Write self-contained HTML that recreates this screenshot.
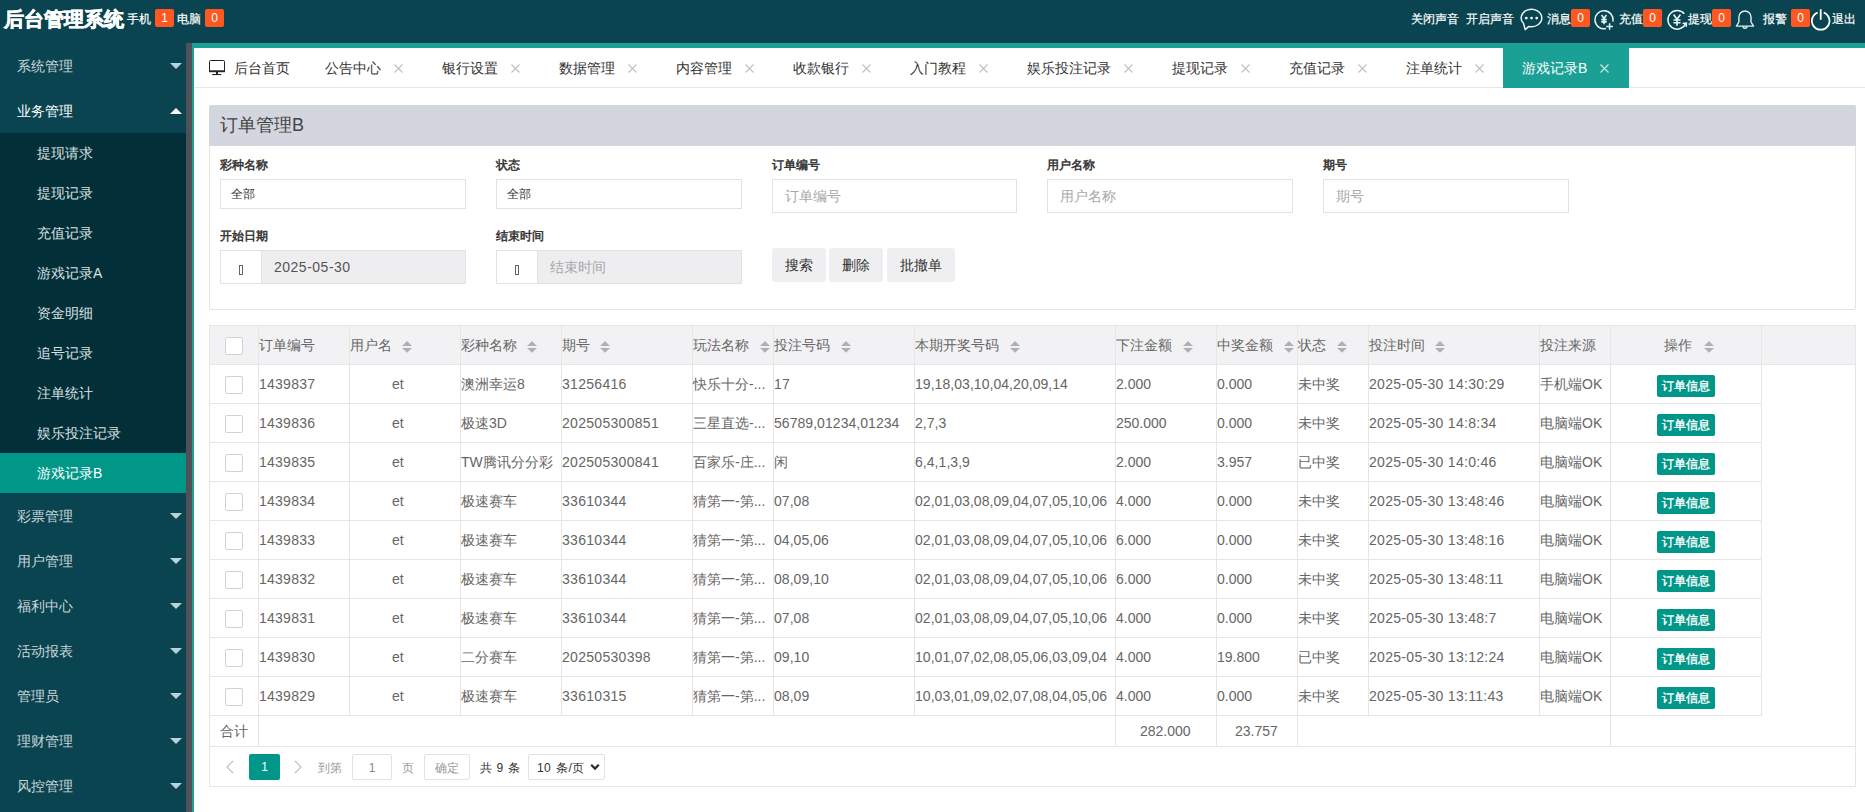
<!DOCTYPE html><html><head><meta charset="utf-8"><style>
*{box-sizing:border-box;margin:0;padding:0}
html,body{width:1865px;height:812px;overflow:hidden;background:#fff;font-family:"Liberation Sans",sans-serif;color:#666}
.a{position:absolute;white-space:nowrap}
#hdr{position:absolute;left:0;top:0;width:1865px;height:43px;background:#0a4450}
#side{position:absolute;left:0;top:43px;width:186px;height:769px;background:#0a4450}
#strip{position:absolute;left:186px;top:43px;width:6px;height:769px;background:#4e5157}
#main{position:absolute;left:192px;top:43px;width:1673px;height:769px;border-left:2px solid #1aa094;border-top:5px solid #1aa094;background:#fff}
.badge{position:absolute;height:18px;width:19px;background:#ff5722;color:#fff;border-radius:2px;font-size:12px;line-height:18px;text-align:center;top:9px}
.ht{position:absolute;color:#fff;font-size:12px;line-height:16px;top:11px;-webkit-text-stroke:0.2px #fff;white-space:nowrap}
.nav{position:absolute;left:0;width:186px;height:45px;color:#fff;font-size:14px;line-height:47px;padding-left:17px}
.nav .tri{position:absolute;left:170px;top:20px;width:0;height:0;border-left:6px solid transparent;border-right:6px solid transparent;border-top:6px solid #b8d3d6}
.nav .tri.up{border-top:0;border-bottom:6px solid #fff;top:20px}
.sub{position:absolute;left:0;width:186px;height:40px;color:#d9e0e2;font-size:14px;line-height:41px;padding-left:37px}
.tt{position:absolute;top:60px;font-size:14px;line-height:16px;color:#333;white-space:nowrap}
.tx{position:absolute;top:64px;width:9px;height:9px}
.lbl{position:absolute;font-size:12px;font-weight:normal;-webkit-text-stroke:0.5px #333;color:#333;line-height:14px;white-space:nowrap}
.inp{position:absolute;border:1px solid #e2e2e2;background:#fff;font-size:12px;color:#333;white-space:nowrap}
.ph{color:#a8a8a8;font-size:14px}
.btn{position:absolute;top:248px;height:34px;background:#efeff1;border-radius:3px;font-size:14px;color:#333;line-height:34px;text-align:center}
.hl{position:absolute;height:1px;background:#e6e6e6}
.vl{position:absolute;width:1px;background:#e6e6e6}
.c{position:absolute;font-size:14px;color:#666;line-height:16px;white-space:nowrap}
.cb{position:absolute;width:18px;height:18px;border:1px solid #d2d2d2;border-radius:2px;background:#fff}
.so{position:absolute;width:10px;height:13px}
.ob{position:absolute;left:1657px;width:58px;height:22px;background:#009688;color:#fff;font-size:12px;line-height:22px;-webkit-text-stroke:0.35px #fff;text-align:center;border-radius:2px}
</style></head><body>
<div id="hdr">
<div class="a" style="left:4px;top:7px;font-size:20px;font-weight:bold;color:#fff;line-height:24px;-webkit-text-stroke:0.6px #fff">后台管理系统</div>
<div class="ht" style="left:127px">手机</div><div class="badge" style="left:155px">1</div>
<div class="ht" style="left:177px">电脑</div><div class="badge" style="left:205px">0</div>
<div class="ht" style="left:1411px">关闭声音</div>
<div class="ht" style="left:1466px">开启声音</div>
<div class="ht" style="left:1547px">消息</div><div class="badge" style="left:1571px">0</div>
<div class="ht" style="left:1619px">充值</div><div class="badge" style="left:1643px">0</div>
<div class="ht" style="left:1688px">提现</div><div class="badge" style="left:1712px">0</div>
<div class="ht" style="left:1763px">报警</div><div class="badge" style="left:1791px">0</div>
<div class="ht" style="left:1832px">退出</div>
<svg class="a" style="left:1519px;top:8px" width="26" height="24" viewBox="0 0 26 24"><path d="M9.83 18.4A10.3 8.7 0 1 0 4.61 15.59L6.2 21.6Z" fill="none" stroke="#eaf6f6" stroke-width="1.5" stroke-linejoin="round"/><circle cx="7.3" cy="10.1" r="1.45" fill="#eaf6f6"/><circle cx="12.5" cy="10.1" r="1.45" fill="#eaf6f6"/><circle cx="17.7" cy="10.1" r="1.45" fill="#eaf6f6"/></svg>
<svg class="a" style="left:1594px;top:9px" width="22" height="22" viewBox="0 0 22 22"><path d="M18.8 12.6A9 9 0 1 0 12 19.57" fill="none" stroke="#eaf6f6" stroke-width="1.5"/><path d="M7.6 6L10 9.6L12.4 6M10 9.6V15.2M7.3 10.6H12.7M7.3 12.9H12.7" fill="none" stroke="#eaf6f6" stroke-width="1.6"/><path d="M15.6 14.2V20.8M12.3 17.5H18.9" stroke="#eaf6f6" stroke-width="1.5"/></svg>
<svg class="a" style="left:1666px;top:9px" width="24" height="22" viewBox="0 0 24 22"><path d="M18.32 4.82A9.3 9.3 0 1 0 19.63 14.73" fill="none" stroke="#eaf6f6" stroke-width="1.5"/><path d="M16.6 14.6L20.4 14.1L20.2 17.9" fill="none" stroke="#eaf6f6" stroke-width="1.5"/><path d="M7.6 5.5L11 10.3L14.4 5.5M11 10.3V16.7M7.5 11H14.5M7.5 13.8H14.5" fill="none" stroke="#eaf6f6" stroke-width="1.6"/></svg>
<svg class="a" style="left:1734px;top:9px" width="22" height="22" viewBox="0 0 22 22"><path d="M4.9 13V8A6.05 6 0 0 1 17 8V13L19.6 17.1H2.4Z" fill="none" stroke="#dff0f0" stroke-width="1.4" stroke-linejoin="round"/><path d="M9 17.2A2 2 0 0 0 13 17.2" fill="none" stroke="#dff0f0" stroke-width="1.4"/></svg>
<svg class="a" style="left:1810px;top:8px" width="22" height="24" viewBox="0 0 22 24"><path d="M7.69 4.63A8.8 8.8 0 1 0 13.71 4.63" fill="none" stroke="#fff" stroke-width="1.8"/><path d="M10.7 1.3V11.8" stroke="#fff" stroke-width="1.8"/></svg>
</div>
<div id="side">
<div class="nav" style="top:0px;color:#c9d6d9">系统管理<span class="tri"></span></div>
<div class="nav" style="top:45px;color:#fff">业务管理<span class="tri up"></span></div>
<div style="position:absolute;left:0;top:90px;width:186px;height:360px;background:#032f38"></div>
<div class="sub" style="top:90px">提现请求</div>
<div class="sub" style="top:130px">提现记录</div>
<div class="sub" style="top:170px">充值记录</div>
<div class="sub" style="top:210px">游戏记录A</div>
<div class="sub" style="top:250px">资金明细</div>
<div class="sub" style="top:290px">追号记录</div>
<div class="sub" style="top:330px">注单统计</div>
<div class="sub" style="top:370px">娱乐投注记录</div>
<div class="sub" style="top:410px;background:#009688;color:#fff">游戏记录B</div>
<div class="nav" style="top:450px;color:#c9d6d9">彩票管理<span class="tri"></span></div>
<div class="nav" style="top:495px;color:#c9d6d9">用户管理<span class="tri"></span></div>
<div class="nav" style="top:540px;color:#c9d6d9">福利中心<span class="tri"></span></div>
<div class="nav" style="top:585px;color:#c9d6d9">活动报表<span class="tri"></span></div>
<div class="nav" style="top:630px;color:#c9d6d9">管理员<span class="tri"></span></div>
<div class="nav" style="top:675px;color:#c9d6d9">理财管理<span class="tri"></span></div>
<div class="nav" style="top:720px;color:#c9d6d9">风控管理<span class="tri"></span></div>
</div>
<div id="strip"></div>
<div id="main"></div>
<div class="hl" style="left:194px;top:87px;width:1671px;background:#e6e6e6"></div>
<div class="a" style="left:1503px;top:48px;width:126px;height:40px;background:#1aa094"></div>
<svg class="a" style="left:208px;top:59px" width="18" height="17" viewBox="0 0 18 17"><rect x="1.5" y="1.5" width="15" height="11" rx="1" fill="none" stroke="#222" stroke-width="1"/><rect x="1" y="11.3" width="16" height="1.9" fill="#222"/><rect x="8" y="13" width="2" height="2" fill="#222"/><rect x="4.2" y="15" width="9" height="1.1" fill="#222"/></svg>
<div class="tt" style="left:234px">后台首页</div>
<div class="tt" style="left:325px;color:#333">公告中心</div>
<svg class="tx" style="left:394px" viewBox="0 0 9 9"><path d="M0.5 0.5L8.5 8.5M8.5 0.5L0.5 8.5" stroke="#c0c0c0" stroke-width="1.1"/></svg>
<div class="tt" style="left:442px;color:#333">银行设置</div>
<svg class="tx" style="left:511px" viewBox="0 0 9 9"><path d="M0.5 0.5L8.5 8.5M8.5 0.5L0.5 8.5" stroke="#c0c0c0" stroke-width="1.1"/></svg>
<div class="tt" style="left:559px;color:#333">数据管理</div>
<svg class="tx" style="left:628px" viewBox="0 0 9 9"><path d="M0.5 0.5L8.5 8.5M8.5 0.5L0.5 8.5" stroke="#c0c0c0" stroke-width="1.1"/></svg>
<div class="tt" style="left:676px;color:#333">内容管理</div>
<svg class="tx" style="left:745px" viewBox="0 0 9 9"><path d="M0.5 0.5L8.5 8.5M8.5 0.5L0.5 8.5" stroke="#c0c0c0" stroke-width="1.1"/></svg>
<div class="tt" style="left:793px;color:#333">收款银行</div>
<svg class="tx" style="left:862px" viewBox="0 0 9 9"><path d="M0.5 0.5L8.5 8.5M8.5 0.5L0.5 8.5" stroke="#c0c0c0" stroke-width="1.1"/></svg>
<div class="tt" style="left:910px;color:#333">入门教程</div>
<svg class="tx" style="left:979px" viewBox="0 0 9 9"><path d="M0.5 0.5L8.5 8.5M8.5 0.5L0.5 8.5" stroke="#c0c0c0" stroke-width="1.1"/></svg>
<div class="tt" style="left:1027px;color:#333">娱乐投注记录</div>
<svg class="tx" style="left:1124px" viewBox="0 0 9 9"><path d="M0.5 0.5L8.5 8.5M8.5 0.5L0.5 8.5" stroke="#c0c0c0" stroke-width="1.1"/></svg>
<div class="tt" style="left:1172px;color:#333">提现记录</div>
<svg class="tx" style="left:1241px" viewBox="0 0 9 9"><path d="M0.5 0.5L8.5 8.5M8.5 0.5L0.5 8.5" stroke="#c0c0c0" stroke-width="1.1"/></svg>
<div class="tt" style="left:1289px;color:#333">充值记录</div>
<svg class="tx" style="left:1358px" viewBox="0 0 9 9"><path d="M0.5 0.5L8.5 8.5M8.5 0.5L0.5 8.5" stroke="#c0c0c0" stroke-width="1.1"/></svg>
<div class="tt" style="left:1406px;color:#333">注单统计</div>
<svg class="tx" style="left:1475px" viewBox="0 0 9 9"><path d="M0.5 0.5L8.5 8.5M8.5 0.5L0.5 8.5" stroke="#c0c0c0" stroke-width="1.1"/></svg>
<div class="tt" style="left:1522px;color:#fff">游戏记录B</div>
<svg class="tx" style="left:1600px" viewBox="0 0 9 9"><path d="M0.5 0.5L8.5 8.5M8.5 0.5L0.5 8.5" stroke="#cfe8e5" stroke-width="1.1"/></svg>
<div class="a" style="left:209px;top:105px;width:1647px;height:205px;border:1px solid #e4e4e4;border-radius:2px;background:#fff"></div>
<div class="a" style="left:209px;top:105px;width:1647px;height:41px;background:#d3d6de;border-radius:2px 2px 0 0"></div>
<div class="a" style="left:220px;top:114px;font-size:18px;line-height:22px;color:#444">订单管理B</div>
<div class="lbl" style="left:220px;top:158px">彩种名称</div>
<div class="lbl" style="left:496px;top:158px">状态</div>
<div class="lbl" style="left:772px;top:158px">订单编号</div>
<div class="lbl" style="left:1047px;top:158px">用户名称</div>
<div class="lbl" style="left:1323px;top:158px">期号</div>
<div class="inp" style="left:220px;top:179px;width:246px;height:30px;padding-left:10px;line-height:28px">全部</div>
<div class="inp" style="left:496px;top:179px;width:246px;height:30px;padding-left:10px;line-height:28px">全部</div>
<div class="inp ph" style="left:772px;top:179px;width:245px;height:34px;padding-left:12px;line-height:33px">订单编号</div>
<div class="inp ph" style="left:1047px;top:179px;width:246px;height:34px;padding-left:12px;line-height:33px">用户名称</div>
<div class="inp ph" style="left:1323px;top:179px;width:246px;height:34px;padding-left:12px;line-height:33px">期号</div>
<div class="lbl" style="left:220px;top:229px">开始日期</div>
<div class="lbl" style="left:496px;top:229px">结束时间</div>
<div class="inp" style="left:220px;top:250px;width:246px;height:34px;background:#eeeef0"></div>
<div class="a" style="left:220px;top:250px;width:42px;height:34px;background:#fff;border:1px solid #e2e2e2"></div>
<div class="a" style="left:239px;top:265px;width:4px;height:10px;border:1px solid #666"></div>
<div class="a" style="left:274px;top:259px;font-size:14px;line-height:16px;color:#555;letter-spacing:0.5px">2025-05-30</div>
<div class="inp" style="left:496px;top:250px;width:246px;height:34px;background:#eeeef0"></div>
<div class="a" style="left:496px;top:250px;width:42px;height:34px;background:#fff;border:1px solid #e2e2e2"></div>
<div class="a" style="left:515px;top:265px;width:4px;height:10px;border:1px solid #666"></div>
<div class="a" style="left:550px;top:259px;font-size:14px;line-height:16px;color:#a8a8a8">结束时间</div>
<div class="btn" style="left:772px;width:54px">搜索</div>
<div class="btn" style="left:829px;width:54px">删除</div>
<div class="btn" style="left:887px;width:68px">批撤单</div>
<div class="a" style="left:209px;top:325px;width:1647px;height:40px;background:#f2f2f4"></div>
<div class="hl" style="left:209px;top:325px;width:1647px"></div>
<div class="hl" style="left:209px;top:364px;width:1647px"></div>
<div class="hl" style="left:209px;top:403px;width:1553px"></div>
<div class="hl" style="left:209px;top:442px;width:1553px"></div>
<div class="hl" style="left:209px;top:481px;width:1553px"></div>
<div class="hl" style="left:209px;top:520px;width:1553px"></div>
<div class="hl" style="left:209px;top:559px;width:1553px"></div>
<div class="hl" style="left:209px;top:598px;width:1553px"></div>
<div class="hl" style="left:209px;top:637px;width:1553px"></div>
<div class="hl" style="left:209px;top:676px;width:1553px"></div>
<div class="hl" style="left:209px;top:715px;width:1553px"></div>
<div class="hl" style="left:209px;top:746px;width:1647px"></div>
<div class="hl" style="left:209px;top:786px;width:1647px"></div>
<div class="vl" style="left:209px;top:325px;height:462px"></div>
<div class="vl" style="left:1855px;top:325px;height:462px"></div>
<div class="vl" style="left:258px;top:325px;height:391px"></div>
<div class="vl" style="left:349px;top:325px;height:391px"></div>
<div class="vl" style="left:460px;top:325px;height:391px"></div>
<div class="vl" style="left:561px;top:325px;height:391px"></div>
<div class="vl" style="left:692px;top:325px;height:391px"></div>
<div class="vl" style="left:773px;top:325px;height:391px"></div>
<div class="vl" style="left:914px;top:325px;height:391px"></div>
<div class="vl" style="left:1115px;top:325px;height:391px"></div>
<div class="vl" style="left:1216px;top:325px;height:391px"></div>
<div class="vl" style="left:1297px;top:325px;height:391px"></div>
<div class="vl" style="left:1368px;top:325px;height:391px"></div>
<div class="vl" style="left:1539px;top:325px;height:391px"></div>
<div class="vl" style="left:1610px;top:325px;height:391px"></div>
<div class="vl" style="left:1761px;top:325px;height:391px"></div>
<div class="vl" style="left:258px;top:716px;height:31px"></div>
<div class="vl" style="left:1115px;top:716px;height:31px"></div>
<div class="vl" style="left:1216px;top:716px;height:31px"></div>
<div class="vl" style="left:1297px;top:716px;height:31px"></div>
<div class="vl" style="left:1610px;top:716px;height:31px"></div>
<div class="c" style="left:259px;top:337px">订单编号</div>
<div class="c" style="left:350px;top:337px">用户名</div>
<svg class="so" style="left:402px;top:340px" viewBox="0 0 10 13"><path d="M5 1L10 6H0z M5 12.7L10 8H0z" fill="#b0b0b2"/></svg>
<div class="c" style="left:461px;top:337px">彩种名称</div>
<svg class="so" style="left:527px;top:340px" viewBox="0 0 10 13"><path d="M5 1L10 6H0z M5 12.7L10 8H0z" fill="#b0b0b2"/></svg>
<div class="c" style="left:562px;top:337px">期号</div>
<svg class="so" style="left:600px;top:340px" viewBox="0 0 10 13"><path d="M5 1L10 6H0z M5 12.7L10 8H0z" fill="#b0b0b2"/></svg>
<div class="c" style="left:693px;top:337px">玩法名称</div>
<svg class="so" style="left:760px;top:340px" viewBox="0 0 10 13"><path d="M5 1L10 6H0z M5 12.7L10 8H0z" fill="#b0b0b2"/></svg>
<div class="c" style="left:774px;top:337px">投注号码</div>
<svg class="so" style="left:841px;top:340px" viewBox="0 0 10 13"><path d="M5 1L10 6H0z M5 12.7L10 8H0z" fill="#b0b0b2"/></svg>
<div class="c" style="left:915px;top:337px">本期开奖号码</div>
<svg class="so" style="left:1010px;top:340px" viewBox="0 0 10 13"><path d="M5 1L10 6H0z M5 12.7L10 8H0z" fill="#b0b0b2"/></svg>
<div class="c" style="left:1116px;top:337px">下注金额</div>
<svg class="so" style="left:1183px;top:340px" viewBox="0 0 10 13"><path d="M5 1L10 6H0z M5 12.7L10 8H0z" fill="#b0b0b2"/></svg>
<div class="c" style="left:1217px;top:337px">中奖金额</div>
<svg class="so" style="left:1284px;top:340px" viewBox="0 0 10 13"><path d="M5 1L10 6H0z M5 12.7L10 8H0z" fill="#b0b0b2"/></svg>
<div class="c" style="left:1298px;top:337px">状态</div>
<svg class="so" style="left:1337px;top:340px" viewBox="0 0 10 13"><path d="M5 1L10 6H0z M5 12.7L10 8H0z" fill="#b0b0b2"/></svg>
<div class="c" style="left:1369px;top:337px">投注时间</div>
<svg class="so" style="left:1435px;top:340px" viewBox="0 0 10 13"><path d="M5 1L10 6H0z M5 12.7L10 8H0z" fill="#b0b0b2"/></svg>
<div class="c" style="left:1540px;top:337px">投注来源</div>
<div class="c" style="left:1664px;top:337px">操作</div>
<svg class="so" style="left:1704px;top:340px" viewBox="0 0 10 13"><path d="M5 1L10 6H0z M5 12.7L10 8H0z" fill="#b0b0b2"/></svg>
<div class="cb" style="left:225px;top:337px"></div>
<div class="cb" style="left:225px;top:376px"></div>
<div class="c" style="left:259px;top:376px;letter-spacing:0.25px">1439837</div>
<div class="c" style="left:392px;top:376px">et</div>
<div class="c" style="left:461px;top:376px">澳洲幸运8</div>
<div class="c" style="left:562px;top:376px;letter-spacing:0.3px">31256416</div>
<div class="c" style="left:693px;top:376px">快乐十分-...</div>
<div class="c" style="left:774px;top:376px;letter-spacing:0.3px">17</div>
<div class="c" style="left:915px;top:376px;letter-spacing:0.05px">19,18,03,10,04,20,09,14</div>
<div class="c" style="left:1116px;top:376px">2.000</div>
<div class="c" style="left:1217px;top:376px">0.000</div>
<div class="c" style="left:1298px;top:376px">未中奖</div>
<div class="c" style="left:1369px;top:376px;letter-spacing:0.3px">2025-05-30 14:30:29</div>
<div class="c" style="left:1540px;top:376px">手机端OK</div>
<div class="ob" style="top:375px">订单信息</div>
<div class="cb" style="left:225px;top:415px"></div>
<div class="c" style="left:259px;top:415px;letter-spacing:0.25px">1439836</div>
<div class="c" style="left:392px;top:415px">et</div>
<div class="c" style="left:461px;top:415px">极速3D</div>
<div class="c" style="left:562px;top:415px;letter-spacing:0.3px">202505300851</div>
<div class="c" style="left:693px;top:415px">三星直选-...</div>
<div class="c" style="left:774px;top:415px;letter-spacing:0.05px">56789,01234,01234</div>
<div class="c" style="left:915px;top:415px;letter-spacing:0.05px">2,7,3</div>
<div class="c" style="left:1116px;top:415px">250.000</div>
<div class="c" style="left:1217px;top:415px">0.000</div>
<div class="c" style="left:1298px;top:415px">未中奖</div>
<div class="c" style="left:1369px;top:415px;letter-spacing:0.3px">2025-05-30 14:8:34</div>
<div class="c" style="left:1540px;top:415px">电脑端OK</div>
<div class="ob" style="top:414px">订单信息</div>
<div class="cb" style="left:225px;top:454px"></div>
<div class="c" style="left:259px;top:454px;letter-spacing:0.25px">1439835</div>
<div class="c" style="left:392px;top:454px">et</div>
<div class="c" style="left:461px;top:454px">TW腾讯分分彩</div>
<div class="c" style="left:562px;top:454px;letter-spacing:0.3px">202505300841</div>
<div class="c" style="left:693px;top:454px">百家乐-庄...</div>
<div class="c" style="left:774px;top:454px">闲</div>
<div class="c" style="left:915px;top:454px;letter-spacing:0.05px">6,4,1,3,9</div>
<div class="c" style="left:1116px;top:454px">2.000</div>
<div class="c" style="left:1217px;top:454px">3.957</div>
<div class="c" style="left:1298px;top:454px">已中奖</div>
<div class="c" style="left:1369px;top:454px;letter-spacing:0.3px">2025-05-30 14:0:46</div>
<div class="c" style="left:1540px;top:454px">电脑端OK</div>
<div class="ob" style="top:453px">订单信息</div>
<div class="cb" style="left:225px;top:493px"></div>
<div class="c" style="left:259px;top:493px;letter-spacing:0.25px">1439834</div>
<div class="c" style="left:392px;top:493px">et</div>
<div class="c" style="left:461px;top:493px">极速赛车</div>
<div class="c" style="left:562px;top:493px;letter-spacing:0.3px">33610344</div>
<div class="c" style="left:693px;top:493px">猜第一-第...</div>
<div class="c" style="left:774px;top:493px;letter-spacing:0.05px">07,08</div>
<div class="c" style="left:915px;top:493px;letter-spacing:0.05px">02,01,03,08,09,04,07,05,10,06</div>
<div class="c" style="left:1116px;top:493px">4.000</div>
<div class="c" style="left:1217px;top:493px">0.000</div>
<div class="c" style="left:1298px;top:493px">未中奖</div>
<div class="c" style="left:1369px;top:493px;letter-spacing:0.3px">2025-05-30 13:48:46</div>
<div class="c" style="left:1540px;top:493px">电脑端OK</div>
<div class="ob" style="top:492px">订单信息</div>
<div class="cb" style="left:225px;top:532px"></div>
<div class="c" style="left:259px;top:532px;letter-spacing:0.25px">1439833</div>
<div class="c" style="left:392px;top:532px">et</div>
<div class="c" style="left:461px;top:532px">极速赛车</div>
<div class="c" style="left:562px;top:532px;letter-spacing:0.3px">33610344</div>
<div class="c" style="left:693px;top:532px">猜第一-第...</div>
<div class="c" style="left:774px;top:532px;letter-spacing:0.05px">04,05,06</div>
<div class="c" style="left:915px;top:532px;letter-spacing:0.05px">02,01,03,08,09,04,07,05,10,06</div>
<div class="c" style="left:1116px;top:532px">6.000</div>
<div class="c" style="left:1217px;top:532px">0.000</div>
<div class="c" style="left:1298px;top:532px">未中奖</div>
<div class="c" style="left:1369px;top:532px;letter-spacing:0.3px">2025-05-30 13:48:16</div>
<div class="c" style="left:1540px;top:532px">电脑端OK</div>
<div class="ob" style="top:531px">订单信息</div>
<div class="cb" style="left:225px;top:571px"></div>
<div class="c" style="left:259px;top:571px;letter-spacing:0.25px">1439832</div>
<div class="c" style="left:392px;top:571px">et</div>
<div class="c" style="left:461px;top:571px">极速赛车</div>
<div class="c" style="left:562px;top:571px;letter-spacing:0.3px">33610344</div>
<div class="c" style="left:693px;top:571px">猜第一-第...</div>
<div class="c" style="left:774px;top:571px;letter-spacing:0.05px">08,09,10</div>
<div class="c" style="left:915px;top:571px;letter-spacing:0.05px">02,01,03,08,09,04,07,05,10,06</div>
<div class="c" style="left:1116px;top:571px">6.000</div>
<div class="c" style="left:1217px;top:571px">0.000</div>
<div class="c" style="left:1298px;top:571px">未中奖</div>
<div class="c" style="left:1369px;top:571px;letter-spacing:0.3px">2025-05-30 13:48:11</div>
<div class="c" style="left:1540px;top:571px">电脑端OK</div>
<div class="ob" style="top:570px">订单信息</div>
<div class="cb" style="left:225px;top:610px"></div>
<div class="c" style="left:259px;top:610px;letter-spacing:0.25px">1439831</div>
<div class="c" style="left:392px;top:610px">et</div>
<div class="c" style="left:461px;top:610px">极速赛车</div>
<div class="c" style="left:562px;top:610px;letter-spacing:0.3px">33610344</div>
<div class="c" style="left:693px;top:610px">猜第一-第...</div>
<div class="c" style="left:774px;top:610px;letter-spacing:0.05px">07,08</div>
<div class="c" style="left:915px;top:610px;letter-spacing:0.05px">02,01,03,08,09,04,07,05,10,06</div>
<div class="c" style="left:1116px;top:610px">4.000</div>
<div class="c" style="left:1217px;top:610px">0.000</div>
<div class="c" style="left:1298px;top:610px">未中奖</div>
<div class="c" style="left:1369px;top:610px;letter-spacing:0.3px">2025-05-30 13:48:7</div>
<div class="c" style="left:1540px;top:610px">电脑端OK</div>
<div class="ob" style="top:609px">订单信息</div>
<div class="cb" style="left:225px;top:649px"></div>
<div class="c" style="left:259px;top:649px;letter-spacing:0.25px">1439830</div>
<div class="c" style="left:392px;top:649px">et</div>
<div class="c" style="left:461px;top:649px">二分赛车</div>
<div class="c" style="left:562px;top:649px;letter-spacing:0.3px">20250530398</div>
<div class="c" style="left:693px;top:649px">猜第一-第...</div>
<div class="c" style="left:774px;top:649px;letter-spacing:0.05px">09,10</div>
<div class="c" style="left:915px;top:649px;letter-spacing:0.05px">10,01,07,02,08,05,06,03,09,04</div>
<div class="c" style="left:1116px;top:649px">4.000</div>
<div class="c" style="left:1217px;top:649px">19.800</div>
<div class="c" style="left:1298px;top:649px">已中奖</div>
<div class="c" style="left:1369px;top:649px;letter-spacing:0.3px">2025-05-30 13:12:24</div>
<div class="c" style="left:1540px;top:649px">电脑端OK</div>
<div class="ob" style="top:648px">订单信息</div>
<div class="cb" style="left:225px;top:688px"></div>
<div class="c" style="left:259px;top:688px;letter-spacing:0.25px">1439829</div>
<div class="c" style="left:392px;top:688px">et</div>
<div class="c" style="left:461px;top:688px">极速赛车</div>
<div class="c" style="left:562px;top:688px;letter-spacing:0.3px">33610315</div>
<div class="c" style="left:693px;top:688px">猜第一-第...</div>
<div class="c" style="left:774px;top:688px;letter-spacing:0.05px">08,09</div>
<div class="c" style="left:915px;top:688px;letter-spacing:0.05px">10,03,01,09,02,07,08,04,05,06</div>
<div class="c" style="left:1116px;top:688px">4.000</div>
<div class="c" style="left:1217px;top:688px">0.000</div>
<div class="c" style="left:1298px;top:688px">未中奖</div>
<div class="c" style="left:1369px;top:688px;letter-spacing:0.3px">2025-05-30 13:11:43</div>
<div class="c" style="left:1540px;top:688px">电脑端OK</div>
<div class="ob" style="top:687px">订单信息</div>
<div class="c" style="left:220px;top:723px">合计</div>
<div class="c" style="left:1140px;top:723px">282.000</div>
<div class="c" style="left:1235px;top:723px">23.757</div>
<svg class="a" style="left:225px;top:760px" width="10" height="14" viewBox="0 0 10 14"><path d="M8 1L2 7l6 6" fill="none" stroke="#c2c2c2" stroke-width="1.3"/></svg>
<div class="a" style="left:249px;top:754px;width:31px;height:26px;background:#009688;border-radius:2px;color:#fff;font-size:12px;line-height:26px;text-align:center">1</div>
<svg class="a" style="left:293px;top:760px" width="10" height="14" viewBox="0 0 10 14"><path d="M2 1l6 6-6 6" fill="none" stroke="#c2c2c2" stroke-width="1.3"/></svg>
<div class="a" style="left:318px;top:761px;font-size:12px;line-height:14px;color:#999">到第</div>
<div class="a" style="left:352px;top:754px;width:40px;height:26px;border:1px solid #e2e2e2;border-radius:2px;font-size:12px;line-height:26px;text-align:center;color:#888">1</div>
<div class="a" style="left:402px;top:761px;font-size:12px;line-height:14px;color:#999">页</div>
<div class="a" style="left:424px;top:754px;width:46px;height:26px;border:1px solid #e2e2e2;border-radius:2px;font-size:12px;line-height:26px;text-align:center;color:#999">确定</div>
<div class="a" style="left:480px;top:761px;font-size:12px;line-height:14px;color:#333;word-spacing:1.2px">共 9 条</div>
<div class="a" style="left:528px;top:754px;width:77px;height:26px;border:1px solid #e2e2e2;border-radius:2px;font-size:12px;line-height:26px;padding-left:8px;color:#333;word-spacing:1.5px;letter-spacing:0.3px">10 条/页</div>
<svg class="a" style="left:590px;top:763px" width="10" height="8" viewBox="0 0 10 8"><path d="M1.2 1.8l3.8 3.8L8.8 1.8" fill="none" stroke="#2a2a2a" stroke-width="2.2"/></svg>
</body></html>
